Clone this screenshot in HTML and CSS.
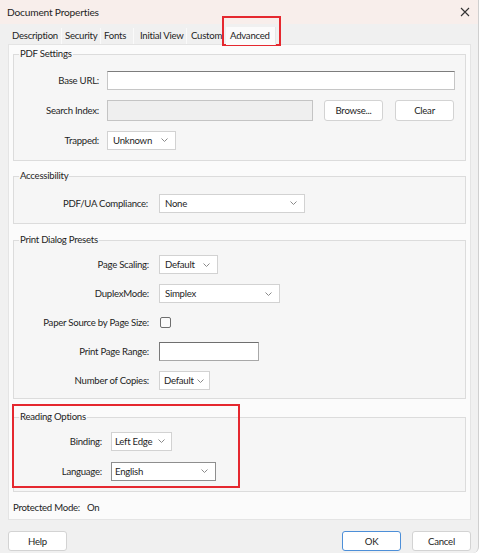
FILE: index.html
```html
<!DOCTYPE html>
<html>
<head>
<meta charset="utf-8">
<link rel="stylesheet" href="styles.css">
</head>
<body>
<div class="dialog">
  <div class="titlebar">
    <span class="title">Document Properties</span>
    <svg class="close" width="10" height="10" viewBox="0 0 10 10"><path d="M1 1L9 9M9 1L1 9" stroke="#333" stroke-width="1.1" fill="none"/></svg>
  </div>
  <div class="tabs">
    <div class="tab t-desc">Description</div>
    <div class="tab t-sec">Security</div>
    <div class="tab t-fonts">Fonts</div>
    <div class="tab t-init">Initial View</div>
    <div class="tab t-custom">Custom</div>
    <div class="tab active">Advanced</div>
  </div>
  <div class="panel">
    <fieldset class="fs fs-pdf">
      <legend>PDF Settings</legend>
      <div class="row"><label class="lbl">Base URL:</label><div class="input url"></div></div>
      <div class="row"><label class="lbl">Search Index:</label><div class="input disabled search"></div><div class="btn browse">Browse...</div><div class="btn clear">Clear</div></div>
      <div class="row"><label class="lbl">Trapped:</label><div class="select w-trapped"><span>Unknown</span><svg class="chev" width="7" height="4" viewBox="0 0 7 4"><path d="M0.5 0.5L3.5 3.5L6.5 0.5" stroke="#8a8a8a" fill="none"/></svg></div></div>
    </fieldset>
    <fieldset class="fs fs-acc">
      <legend>Accessibility</legend>
      <div class="row"><label class="lbl">PDF/UA Compliance:</label><div class="select w-ua"><span>None</span><svg class="chev" width="7" height="4" viewBox="0 0 7 4"><path d="M0.5 0.5L3.5 3.5L6.5 0.5" stroke="#8a8a8a" fill="none"/></svg></div></div>
    </fieldset>
    <fieldset class="fs fs-print">
      <legend>Print Dialog Presets</legend>
      <div class="row"><label class="lbl">Page Scaling:</label><div class="select w-scale"><span>Default</span><svg class="chev" width="7" height="4" viewBox="0 0 7 4"><path d="M0.5 0.5L3.5 3.5L6.5 0.5" stroke="#8a8a8a" fill="none"/></svg></div></div>
      <div class="row"><label class="lbl">DuplexMode:</label><div class="select w-duplex"><span>Simplex</span><svg class="chev" width="7" height="4" viewBox="0 0 7 4"><path d="M0.5 0.5L3.5 3.5L6.5 0.5" stroke="#8a8a8a" fill="none"/></svg></div></div>
      <div class="row"><label class="lbl">Paper Source by Page Size:</label><div class="check"></div></div>
      <div class="row"><label class="lbl">Print Page Range:</label><div class="input dark w-range"></div></div>
      <div class="row"><label class="lbl">Number of Copies:</label><div class="select w-copies"><span>Default</span><svg class="chev" width="7" height="4" viewBox="0 0 7 4"><path d="M0.5 0.5L3.5 3.5L6.5 0.5" stroke="#8a8a8a" fill="none"/></svg></div></div>
    </fieldset>
    <fieldset class="fs fs-read">
      <legend>Reading Options</legend>
      <div class="row"><label class="lbl">Binding:</label><div class="select w-bind"><span>Left Edge</span><svg class="chev" width="7" height="4" viewBox="0 0 7 4"><path d="M0.5 0.5L3.5 3.5L6.5 0.5" stroke="#8a8a8a" fill="none"/></svg></div></div>
      <div class="row"><label class="lbl">Language:</label><div class="select dark w-lang"><span>English</span><svg class="chev" width="7" height="4" viewBox="0 0 7 4"><path d="M0.5 0.5L3.5 3.5L6.5 0.5" stroke="#8a8a8a" fill="none"/></svg></div></div>
    </fieldset>
    <div class="protected"><span class="pm-label">Protected Mode:</span><span>On</span></div>
  </div>
  <div class="footer">
    <div class="btn fbtn">Help</div>
    <div class="spacer"></div>
    <div class="btn fbtn ok">OK</div>
    <div class="btn fbtn">Cancel</div>
  </div>
  <div class="mark mark-tab"></div>
  <div class="mark mark-read"></div>
</div>
</body>
</html>
```

FILE: styles.css
```css
* { box-sizing: border-box; }
html, body { margin: 0; padding: 0; }
body {
  background: #ffffff;
  font-family: Lato, "Liberation Sans", sans-serif;
  font-size: 9.6px;
  letter-spacing: -0.25px;
  color: #1e1e1e;
  width: 483px;
  height: 554px;
  overflow: hidden;
  white-space: nowrap;
}
.dialog {
  position: relative;
  width: 479px;
  height: 553px;
  background: #f0f0f0;
  border-right: 1px solid #cfcfcf;
  border-bottom-right-radius: 6px;
}
.titlebar {
  height: 24px;
  background: #f8eeeb;
  display: flex;
  align-items: center;
  padding: 0 8px 0 7px;
}
.title { flex: 1; font-size: 10.2px; letter-spacing: -0.2px; }
.close { display: block; }

.tabs {
  display: flex;
  align-items: flex-end;
  height: 20px;
  padding: 3px 0 0 9px;
}
.tab {
  height: 16px;
  line-height: 16px;
  border-right: 1px solid #fafafa;
  overflow: hidden;
  flex: none;
}
.t-desc { width: 53px; padding-left: 3px; }
.t-sec { width: 39px; padding-left: 3px; }
.t-fonts { width: 33px; padding-left: 3px; }
.t-init { width: 53px; padding-left: 6px; }
.t-custom { width: 39px; padding-left: 4px; border-right: none; }
.tab.active {
  width: 50px;
  height: 18px;
  line-height: 17px;
  background: #fbfbfb;
  padding-left: 4px;
  margin-bottom: -1px;
  position: relative;
  z-index: 1;
  border-right: 1px solid #e6e6e6;
}

.panel {
  margin: 0 7px 0 8px;
  height: 476px;
  background: #fbfbfb;
  border: 1px solid #e4e4e4;
  padding: 2px 4px 0 4px;
}
.fs {
  margin: 0;
  padding: 0 0 5px 0;
  border: 1px solid #dcdcdc;
  background: #f6f6f6;
  min-width: 0;
}
.fs legend {
  margin-left: 5px;
  padding: 0 1px;
  line-height: 14px;
}
.fs-pdf { padding-top: 4px; }
.fs-acc { margin-top: 8px; padding-top: 5px; }
.fs-print { margin-top: 9px; padding-top: 3px; padding-bottom: 3px; }
.fs-read { margin-top: 11px; padding-top: 2px; padding-bottom: 5px; }

.row {
  display: flex;
  align-items: center;
  height: 30px;
}
.fs-print .row { height: 29px; }
.lbl {
  text-align: right;
  flex: none;
}
.fs-pdf .lbl { width: 85px; margin-right: 8px; }
.fs-acc .lbl { width: 134px; margin-right: 11px; }
.fs-print .lbl { width: 135px; margin-right: 10px; }
.fs-read .lbl { width: 88px; margin-right: 9px; }

.input {
  height: 19px;
  background: #ffffff;
  border: 1px solid #c6c6c6;
  border-top-color: #7d7d7d;
  flex: none;
}
.input.url { width: 348px; }
.input.disabled {
  background: #efefef;
  border: 1px solid #c4c4c4;
  height: 21px;
}
.input.search { width: 206px; }
.input.dark { border: 1px solid #a8a8a8; border-top-color: #6f6f6f; border-left-color: #7a7a7a; }
.w-range { width: 100px; }

.btn {
  height: 21px;
  background: #ffffff;
  border: 1px solid #d3d3d3;
  border-radius: 3px;
  display: flex;
  align-items: center;
  justify-content: center;
  flex: none;
}
.browse { width: 59px; margin-left: 11px; }
.clear { width: 59px; margin-left: 12px; }

.select {
  height: 19px;
  background: #ffffff;
  border: 1px solid #d2d2d2;
  display: flex;
  align-items: center;
  padding: 0 7px 0 5px;
  flex: none;
}
.select span { flex: 1; overflow: hidden; }
.select.dark { border-color: #8e8e8e; }
.chev { display: block; flex: none; margin-left: 3px; }
.w-trapped { width: 69px; }
.w-ua { width: 146px; }
.w-scale { width: 59px; }
.w-duplex { width: 121px; }
.w-copies { width: 51px; padding-left: 4px; padding-right: 5px; }
.w-bind { width: 61px; padding-right: 6px; }
.w-lang { width: 105px; }
.w-bind, .w-lang { padding-left: 3px; }

.check {
  width: 11px;
  height: 11px;
  border: 1px solid #6e6e6e;
  border-radius: 2px;
  background: #fafafa;
  margin-left: 1px;
}

.protected {
  margin-top: 9px;
  line-height: 14px;
  display: flex;
}
.pm-label { width: 74px; flex: none; }

.footer {
  display: flex;
  padding: 11px 7px 0 8px;
}
.fbtn { width: 59px; height: 20px; }
.spacer { flex: 1; }
.ok { border-color: #4d8fd8; margin-right: 11px; }

.mark {
  position: absolute;
  border: 2px solid #e5282f;
  pointer-events: none;
}
.mark-tab { left: 222px; top: 16px; width: 59px; height: 30px; }
.mark-read { left: 12px; top: 404px; width: 228px; height: 84px; }
```
